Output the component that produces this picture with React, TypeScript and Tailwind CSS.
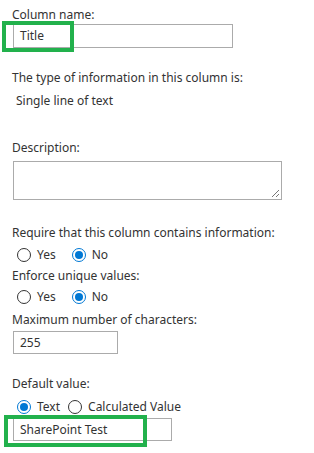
function Radio({ checked, label }: { checked?: boolean; label: string }) {
  return (
    <span className="flex items-center">
      {checked ? (
        <span className="flex h-[14px] w-[14px] items-center justify-center rounded-full border border-[#0078d4] bg-white">
          <span className="h-[8px] w-[8px] rounded-full bg-[#0078d4]" />
        </span>
      ) : (
        <span className="h-[14px] w-[14px] rounded-full border border-[#333333] bg-white" />
      )}
      <span className="ml-[6px]">{label}</span>
    </span>
  );
}

function Label({ children, className = '' }: { children: React.ReactNode; className?: string }) {
  return <div className={`h-[18px] leading-[18px] ${className}`}>{children}</div>;
}

export default function App() {
  return (
    <div
      className="h-[453px] w-[314px] bg-white pl-[12px] pt-[6px] text-[12px] text-[#333333]"
      style={{ fontFamily: '"Segoe UI", "Noto Sans", sans-serif' }}
    >
      <Label>Column name:</Label>
      <div className="relative ml-[1px] h-[24px] w-[220px] border border-[#ababab] px-[6px] leading-[22px]">
        Title
        <div className="absolute left-[-12px] top-[-4px] h-[31px] w-[72px] border-4 border-[#22b14c]" />
      </div>

      <Label className="mt-[21px]">The type of information in this column is:</Label>
      <Label className="ml-[4px] mt-[5px]">Single line of text</Label>

      <Label className="mt-[29px]">Description:</Label>
      <div className="relative ml-[1px] mt-[4px] h-[39px] w-[269px] border border-[#ababab]">
        <svg className="absolute bottom-[1px] right-[1px]" width="9" height="9" viewBox="0 0 9 9">
          <path d="M8 1L1 8M8 5L5 8" stroke="#777" strokeWidth="1" />
        </svg>
      </div>

      <Label className="mt-[24px]">Require that this column contains information:</Label>
      <div className="ml-[5px] mt-[4px] flex h-[18px] items-center gap-[16px]">
        <Radio label="Yes" />
        <Radio checked label="No" />
      </div>
      <Label className="mt-[3px]">Enforce unique values:</Label>
      <div className="ml-[5px] mt-[3px] flex h-[18px] items-center gap-[16px]">
        <Radio label="Yes" />
        <Radio checked label="No" />
      </div>
      <Label className="mt-[5px]">Maximum number of characters:</Label>
      <div className="ml-[1px] mt-[2px] h-[23px] w-[105px] border border-[#ababab] px-[6px] leading-[21px]">
        255
      </div>

      <Label className="mt-[21px]">Default value:</Label>
      <div className="ml-[5px] mt-[5px] flex h-[18px] items-center gap-[8px]">
        <Radio checked label="Text" />
        <Radio label="Calculated Value" />
      </div>
      <div className="relative ml-[1px] mt-[2px] h-[23px] w-[159px] border border-[#ababab] px-[6px] leading-[21px]">
        SharePoint Test
        <div className="absolute left-[-10px] top-[-4px] h-[32px] w-[143px] border-4 border-[#22b14c]" />
      </div>
    </div>
  );
}
